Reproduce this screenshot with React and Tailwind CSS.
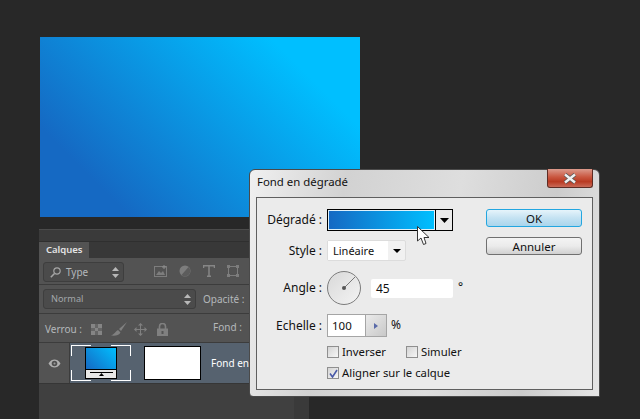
import { useState } from "react";

const panelText = "text-[10px] text-[#b4b8bb]";

function UpDown() {
  return (
    <svg width="7" height="11" viewBox="0 0 7 11" className="shrink-0">
      <path d="M3.5 0L7 4H0Z M0 7H7L3.5 11Z" fill="#b8b8b8" />
    </svg>
  );
}

function FilterIcons() {
  return (
    <div className="flex items-center ml-[30px]">
      {/* image */}
      <svg width="13" height="12" viewBox="0 0 13 12">
        <rect x="0.5" y="1.5" width="12" height="10" fill="none" stroke="#7d7d7d" />
        <path d="M2 10L5 6L7 8L9 6L11 10Z" fill="#7d7d7d" />
        <path d="M10 0V4M8 2H12" stroke="#8d8d8d" />
      </svg>
      {/* half circle */}
      <svg width="12" height="12" viewBox="0 0 12 12" className="ml-[12px]">
        <circle cx="6" cy="6" r="5.5" fill="#7d7d7d" />
        <path d="M9.5 2L2.5 10A5 5 0 0 0 9.5 2Z" fill="#5c5c5c" />
      </svg>
      {/* T */}
      <svg width="12" height="12" viewBox="0 0 12 12" className="ml-[12px]">
        <path d="M0.5 3V0.8H11.5V3M6 0.8V11M4 11.2H8" fill="none" stroke="#868686" strokeWidth="1.5" />
      </svg>
      {/* transform box */}
      <svg width="12" height="12" viewBox="0 0 12 12" className="ml-[12px]">
        <rect x="1.5" y="1.5" width="9" height="9" fill="none" stroke="#7d7d7d" />
        <path d="M0 0H3V3H0Z M9 0H12V3H9Z M0 9H3V12H0Z M9 9H12V12H9Z" fill="#7d7d7d" />
      </svg>
    </div>
  );
}

function LockIcons() {
  return (
    <div className="flex items-center ml-[6px]">
      <svg width="11" height="11" viewBox="0 0 11 11">
        <rect width="11" height="11" fill="#666666" />
        <path d="M0 0H4V4H0Z M7 0H11V4H7Z M4 4H7V7H4Z M0 7H4V11H0Z M7 7H11V11H7Z" fill="#858585" />
      </svg>
      <svg width="16" height="15" viewBox="0 0 16 15" className="ml-[9px]">
        <path d="M16 0L8 7L10 9Z" fill="#808080" />
        <path d="M7 8L9.5 10.5C8 13.5 4 14 0 13.5C3 12.5 4.5 9.5 7 8Z" fill="#808080" />
      </svg>
      <svg width="13" height="13" viewBox="0 0 13 13" className="ml-[7px]">
        <path d="M6.5 2V11M2 6.5H11" stroke="#808080" />
        <path d="M6.5 0L9 2.5H4Z M6.5 13L9 10.5H4Z M0 6.5L2.5 4V9Z M13 6.5L10.5 4V9Z" fill="#808080" />
      </svg>
      <svg width="11" height="13" viewBox="0 0 11 13" className="ml-[10px]">
        <path d="M2.5 6V3.5A3 3 0 0 1 8.5 3.5V6" fill="none" stroke="#808080" strokeWidth="1.6" />
        <rect y="5.5" width="11" height="7.5" fill="#808080" />
        <rect x="4.5" y="8" width="2" height="3" fill="#555555" />
      </svg>
    </div>
  );
}

function LayersPanel() {
  return (
    <div className="flex ml-[39px] mt-[12px] h-[190px]">
      <div className="w-[255px] flex flex-col bg-[#404040] font-['Noto_Sans',sans-serif]">
        <div className="h-[12px] bg-[#3a3a3a] border-t border-[#4b4b4b]" />
        <div className="h-[17px] flex bg-[#383838] border-t border-[#2f2f2f]">
          <div className="w-[50px] bg-[#535353] pl-[7px] text-[9.5px] leading-[16px] font-semibold text-[#e4e4e4]">
            Calques
          </div>
        </div>
        <div className="h-[27px] flex items-start pt-[4px] pl-[4px] bg-[#535353] border-b border-[#3c3c3c]">
          <div className="w-[81px] h-[20px] flex items-center pl-[6px] pr-[4px] bg-[#4b4b4b] border border-[#3e3e3e] rounded-[3px]">
            <svg width="11" height="11" viewBox="0 0 11 11" fill="none" stroke="#a5a5a5" strokeWidth="1.2">
              <circle cx="7" cy="4" r="3.2" />
              <path d="M4.5 6.5L0.8 10.2" strokeWidth="1.6" />
            </svg>
            <span className={`${panelText} ml-[5px] flex-1`}>Type</span>
            <UpDown />
          </div>
          <div className="mt-[3px]">
            <FilterIcons />
          </div>
        </div>
        <div className="h-[29px] flex items-start pt-[4px] pl-[4px] bg-[#535353] border-b border-[#3c3c3c]">
          <div className="w-[153px] h-[20px] flex items-center pl-[7px] pr-[4px] bg-[#4b4b4b] border border-[#3e3e3e] rounded-[3px]">
            <span className="text-[9.2px] text-[#a3a7aa] flex-1">Normal</span>
            <UpDown />
          </div>
          <span className={`${panelText} ml-[7px] mt-px leading-[18px]`}>Opacité :</span>
        </div>
        <div className="h-[29px] flex items-center pl-[6px] pt-[2px] bg-[#535353] border-b border-[#3c3c3c]">
          <span className={`${panelText} w-[40px]`}>Verrou :</span>
          <div className="w-[123px]">
            <LockIcons />
          </div>
          <span className={`${panelText} ml-[5px] -mt-[3px]`}>Fond :</span>
        </div>
        <div className="h-[41px] flex bg-[#56626f] border-b border-[#363636]">
          <div className="w-[31px] bg-[#535353] border-r border-[#3c3c3c] flex items-center justify-center">
            <svg width="13" height="9" viewBox="0 0 13 9">
              <path d="M0.5 4.5C2.5 1 4.5 0.5 6.5 0.5S10.5 1 12.5 4.5C10.5 8 8.5 8.5 6.5 8.5S2.5 8 0.5 4.5Z" fill="#b0b0b0" />
              <circle cx="6.5" cy="4.5" r="2.8" fill="#505050" />
              <circle cx="6.5" cy="4.5" r="1" fill="#9a9a9a" />
            </svg>
          </div>
          <div className="relative w-[60px] h-[36px] ml-[1px] mt-[2px] flex justify-center">
            <span className="absolute left-0 top-0 w-[20px] h-[11px] border-l border-t border-white" />
            <span className="absolute right-0 top-0 w-[20px] h-[11px] border-r border-t border-white" />
            <span className="absolute left-0 bottom-0 w-[20px] h-[11px] border-l border-b border-white" />
            <span className="absolute right-0 bottom-0 w-[20px] h-[11px] border-r border-b border-white" />
            <div className="relative w-[32px] h-[32px] mt-[2px] border border-black flex flex-col bg-white">
              <div className="h-[22px] bg-[linear-gradient(45deg,#1569c3,#00bfff)] border-b border-black" />
              <div className="flex-1 bg-[#e8e8e8] flex flex-col items-center">
                <div className="w-[23px] h-px bg-black mt-[2px]" />
                <svg width="5" height="3" viewBox="0 0 5 3">
                  <path d="M2.5 0L5 3H0Z" fill="#000" />
                </svg>
              </div>
            </div>
          </div>
          <div className="w-[57px] h-[34px] ml-[13px] mt-[3px] bg-white border border-black" />
          <span className="ml-[10px] text-[10px] leading-[40px] text-white">Fond en</span>
        </div>
      </div>
      <div className="w-[15px] bg-[#3a3a3a]" />
    </div>
  );
}

function Checkbox({ label, checked }) {
  return (
    <label className="flex items-center h-[12px]">
      <span className="w-[12px] h-[12px] border border-[#8f8f8f] bg-[linear-gradient(135deg,#d4d4d4,#f6f6f6)] flex items-center justify-center">
        {checked && (
          <svg width="9" height="9" viewBox="0 0 9 9">
            <path d="M1 4.5L3.5 8L8 1" fill="none" stroke="#4a5aa8" strokeWidth="1.6" />
          </svg>
        )}
      </span>
      <span className="ml-[3px] text-[11.3px]">{label}</span>
    </label>
  );
}

function Dialog() {
  const [angle] = useState("45");
  const [scale] = useState("100");
  return (
    <div className="absolute left-[249px] top-[169px] w-[351px] h-[228px] border border-[#4a4a4a] rounded-tl-[6px] rounded-tr-[6px] rounded-bl-[4px] bg-[linear-gradient(100deg,#f0f0f0,#d2d2d2_25%,#dedede_55%,#cccccc_80%,#e6e6e6)] flex flex-col font-['Noto_Sans',sans-serif] text-[12px] text-[#111]">
      <div className="h-[27px] flex justify-between shrink-0">
        <span className="pl-[7px] pt-[4px] leading-[16px] text-[11.4px]">Fond en dégradé</span>
        <div className="w-[46px] h-[19px] mr-[6px] -mt-px rounded-b-[3px] border border-t-0 border-[#5d2c24] bg-[linear-gradient(#dc9a8c,#c9563f_45%,#b93a22_70%,#c96a58)] flex items-center justify-center">
          <svg width="14" height="11" viewBox="0 0 14 11">
            <path d="M2 1.5L12 9.5M12 1.5L2 9.5" stroke="#555" strokeWidth="4" />
            <path d="M2 1.5L12 9.5M12 1.5L2 9.5" stroke="#f0f0f0" strokeWidth="2.4" />
          </svg>
        </div>
      </div>
      <div className="mx-[6px] h-[193px] bg-[#ebebeb] border border-[#5f5f5f] flex pt-[11px]">
        <div className="w-[228px] flex flex-col shrink-0">
          <div className="flex items-center h-[22px]">
            <span className="w-[65px] text-right">Dégradé :</span>
            <div className="ml-[5px] w-[126px] h-[22px] border border-black flex bg-[#ebebeb]">
              <div className="w-[107px] p-px bg-[#dff1fb]">
                <div className="h-full bg-[linear-gradient(90deg,#1569c3,#00bfff)]" />
              </div>
              <div className="flex-1 border-l border-black flex items-center justify-center">
                <svg width="9" height="5" viewBox="0 0 9 5">
                  <path d="M0 0H9L4.5 5Z" fill="#000" />
                </svg>
              </div>
            </div>
          </div>
          <div className="flex items-center h-[21px] mt-[9px]">
            <span className="w-[65px] text-right">Style :</span>
            <div className="ml-[5px] w-[79px] h-[21px] bg-[#f1f1f1] border border-[#dcdcdc] rounded-[2px] flex items-center">
              <span className="w-[60px] h-full bg-white pl-[5px] text-[11px] leading-[19px]">Linéaire</span>
              <svg width="8" height="4" viewBox="0 0 8 4" className="ml-[5px]">
                <path d="M0 0H8L4 4Z" fill="#000" />
              </svg>
            </div>
          </div>
          <div className="flex items-center h-[34px] mt-[10px]">
            <span className="w-[65px] text-right">Angle :</span>
            <svg width="34" height="34" viewBox="0 0 34 34" className="ml-[5px] shrink-0">
              <defs>
                <linearGradient id="dial" x1="0" y1="0" x2="1" y2="1">
                  <stop offset="0" stopColor="#d8d8d8" />
                  <stop offset="1" stopColor="#f4f4f4" />
                </linearGradient>
              </defs>
              <circle cx="17" cy="17" r="16.5" fill="url(#dial)" stroke="#7c7c7c" />
              <path d="M17 17L28 6" stroke="#777" />
              <circle cx="17" cy="17" r="2" fill="#555" />
            </svg>
            <div className="ml-[10px] w-[82px] h-[19px] bg-white rounded-[2px] pl-[5px] leading-[19px]">{angle}</div>
            <span className="ml-[5px] -mt-[2px]">°</span>
          </div>
          <div className="flex items-center h-[23px] mt-[9px]">
            <span className="w-[65px] text-right">Echelle :</span>
            <div className="ml-[5px] w-[60px] h-[23px] border border-[#a5a5a5] flex">
              <div className="w-[37px] bg-white pl-[4px] text-[11.5px] leading-[21px]">{scale}</div>
              <div className="flex-1 border-l border-[#a5a5a5] bg-[linear-gradient(135deg,#ebebeb,#c8c8c8)] flex items-center justify-center">
                <svg width="4" height="6" viewBox="0 0 4 6">
                  <path d="M0 0L4 3L0 6Z" fill="#5a6aa8" />
                </svg>
              </div>
            </div>
            <span className="ml-[4px] -mt-[2px]">%</span>
          </div>
          <div className="flex pl-[70px] mt-[9px] h-[12px]">
            <div className="w-[79px]">
              <Checkbox label="Inverser" />
            </div>
            <Checkbox label="Simuler" />
          </div>
          <div className="pl-[70px] mt-[9px]">
            <Checkbox label="Aligner sur le calque" checked />
          </div>
        </div>
        <div className="flex flex-col ml-[1px] text-[11.5px]">
          <button className="w-[96px] h-[18px] rounded-[3px] border border-[#23a6e0] bg-[linear-gradient(#e6f4fb,#c4e2f2_50%,#a9d5ec)] leading-[15px]">
            OK
          </button>
          <button className="w-[96px] h-[18px] mt-[10px] rounded-[3px] border border-[#707070] bg-[linear-gradient(#f4f4f4,#ebebeb_50%,#d0d0d0)] leading-[15px]">
            Annuler
          </button>
        </div>
      </div>
    </div>
  );
}

export default function App() {
  return (
    <div className="relative w-[640px] h-[419px] overflow-hidden bg-[#282828]">
      <div className="w-[320px] h-[180px] ml-[40px] mt-[37px] bg-[linear-gradient(45deg,#1569c3_18%,#00bfff_82%)]" />
      <LayersPanel />
      <Dialog />
      {/* mouse cursor over the gradient swatch */}
      <svg width="14" height="20" viewBox="0 0 14 20" className="absolute left-[417px] top-[226px]">
        <path d="M0.5 0.5V15L4 12L6.5 18.5L9 17.5L7 11.5H12Z" fill="#fff" stroke="#333" />
      </svg>
    </div>
  );
}
